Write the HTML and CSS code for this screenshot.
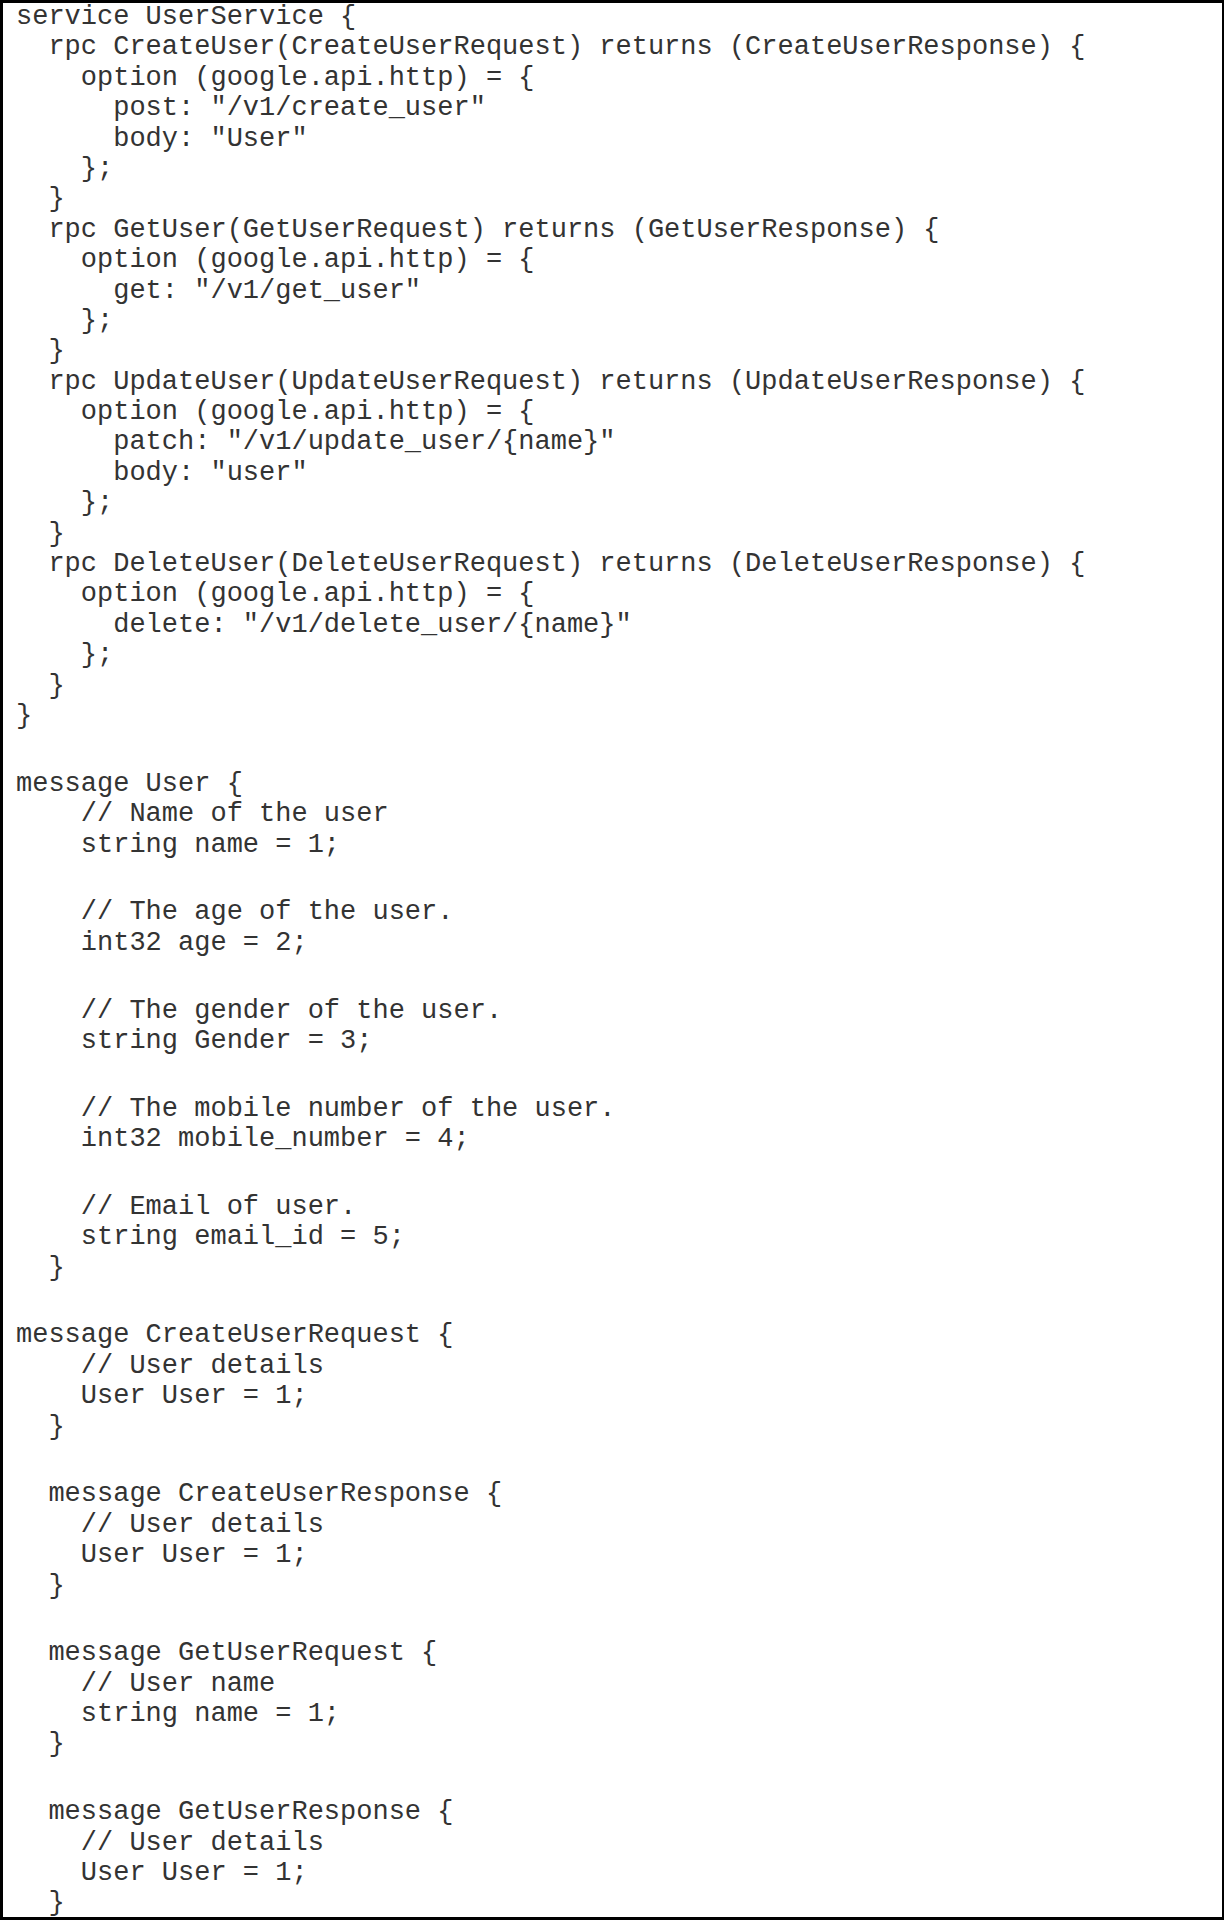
FILE: index.html
```html
<!DOCTYPE html>
<html>
<head>
<meta charset="utf-8">
<link rel="stylesheet" href="styles.css">
</head>
<body>
<div class="sheet">
<div class="code">
<div class="ln">service UserService {</div>
<div class="ln">  rpc CreateUser(CreateUserRequest) returns (CreateUserResponse) {</div>
<div class="ln">    option (google.api.http) = {</div>
<div class="ln">      post: "/v1/create_user"</div>
<div class="ln">      body: "User"</div>
<div class="ln">    };</div>
<div class="ln">  }</div>
<div class="ln">  rpc GetUser(GetUserRequest) returns (GetUserResponse) {</div>
<div class="ln">    option (google.api.http) = {</div>
<div class="ln">      get: "/v1/get_user"</div>
<div class="ln">    };</div>
<div class="ln">  }</div>
<div class="ln">  rpc UpdateUser(UpdateUserRequest) returns (UpdateUserResponse) {</div>
<div class="ln">    option (google.api.http) = {</div>
<div class="ln">      patch: "/v1/update_user/{name}"</div>
<div class="ln">      body: "user"</div>
<div class="ln">    };</div>
<div class="ln">  }</div>
<div class="ln">  rpc DeleteUser(DeleteUserRequest) returns (DeleteUserResponse) {</div>
<div class="ln">    option (google.api.http) = {</div>
<div class="ln">      delete: "/v1/delete_user/{name}"</div>
<div class="ln">    };</div>
<div class="ln">  }</div>
<div class="ln">}</div>
<div class="gap"></div>
<div class="ln">message User {</div>
<div class="ln">    // Name of the user</div>
<div class="ln">    string name = 1;</div>
<div class="gap"></div>
<div class="ln">    // The age of the user.</div>
<div class="ln">    int32 age = 2;</div>
<div class="gap"></div>
<div class="ln">    // The gender of the user.</div>
<div class="ln">    string Gender = 3;</div>
<div class="gap"></div>
<div class="ln">    // The mobile number of the user.</div>
<div class="ln">    int32 mobile_number = 4;</div>
<div class="gap"></div>
<div class="ln">    // Email of user.</div>
<div class="ln">    string email_id = 5;</div>
<div class="ln">  }</div>
<div class="gap"></div>
<div class="ln">message CreateUserRequest {</div>
<div class="ln">    // User details</div>
<div class="ln">    User User = 1;</div>
<div class="ln">  }</div>
<div class="gap"></div>
<div class="ln">  message CreateUserResponse {</div>
<div class="ln">    // User details</div>
<div class="ln">    User User = 1;</div>
<div class="ln">  }</div>
<div class="gap"></div>
<div class="ln">  message GetUserRequest {</div>
<div class="ln">    // User name</div>
<div class="ln">    string name = 1;</div>
<div class="ln">  }</div>
<div class="gap"></div>
<div class="ln">  message GetUserResponse {</div>
<div class="ln">    // User details</div>
<div class="ln">    User User = 1;</div>
<div class="ln">  }</div>
</div>
</div>
</body>
</html>
```
FILE: styles.css
```css
html, body {
  margin: 0;
  padding: 0;
  background: #ffffff;
}

.sheet {
  box-sizing: border-box;
  width: 1224px;
  height: 1920px;
  border-style: solid;
  border-color: #000000;
  border-width: 3px 2px 3px 3px;
  padding-left: 13px;
  overflow: hidden;
  background: #ffffff;
}

.code {
  margin-top: -1px;
  font-family: "Liberation Mono", "Courier New", monospace;
  font-size: 27px;
  color: #333333;
}

.ln {
  white-space: pre;
  height: 30.4px;
  line-height: 30.4px;
}

.gap {
  height: 37.4px;
}
```
